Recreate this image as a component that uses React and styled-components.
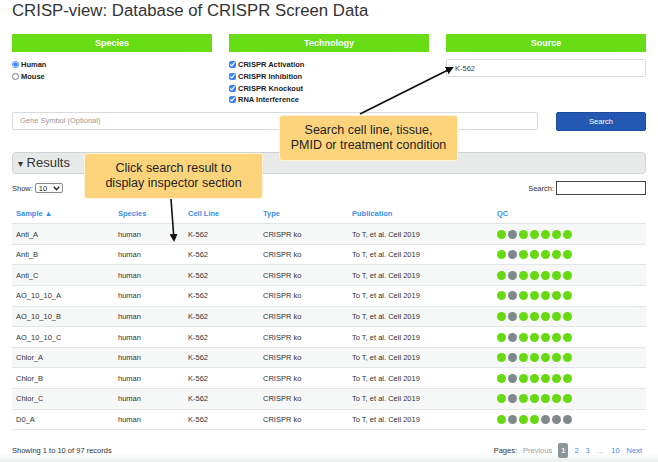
import React from "react";
import styled, { createGlobalStyle } from "styled-components";

const GlobalStyle = createGlobalStyle`
  html, body { margin: 0; padding: 0; background: #fff; }
  body { font-family: "Liberation Sans", Arial, sans-serif; color: #333; }
  * { box-sizing: border-box; }
`;

const rows = [
  ["Anti_A", "gxggggg"],
  ["Anti_B", "gxggggg"],
  ["Anti_C", "gxggggg"],
  ["AO_10_10_A", "gxggggg"],
  ["AO_10_10_B", "gxggggg"],
  ["AO_10_10_C", "gxggggg"],
  ["Chlor_A", "gxggggg"],
  ["Chlor_B", "gxggggg"],
  ["Chlor_C", "gxggggg"],
  ["D0_A", "gxggxxx"],
];

const App = () => {
  return (
    <Page>
      <GlobalStyle />
      <Title>CRISP-view: Database of CRISPR Screen Data</Title>
      <Filters>
        <FilterCol>
          <Header>Species</Header>
          <Options>
            <Option><input type="radio" name="sp" defaultChecked /> Human</Option>
            <Option><input type="radio" name="sp" /> Mouse</Option>
          </Options>
        </FilterCol>
        <FilterCol>
          <Header>Technology</Header>
          <Options>
            <Option><input type="checkbox" defaultChecked /> CRISPR Activation</Option>
            <Option><input type="checkbox" defaultChecked /> CRISPR Inhibition</Option>
            <Option><input type="checkbox" defaultChecked /> CRISPR Knockout</Option>
            <Option><input type="checkbox" defaultChecked /> RNA Interference</Option>
          </Options>
        </FilterCol>
        <FilterCol>
          <Header>Source</Header>
          <TextBox defaultValue="K-562" />
        </FilterCol>
      </Filters>

      <SearchRow>
        <GeneBox placeholder="Gene Symbol (Optional)" />
        <SearchButton>Search</SearchButton>
      </SearchRow>

      <ResultsBar><Caret>▾</Caret> Results</ResultsBar>

      <ToolRow>
        <Show>
          Show:
          <Select>
            <span>10</span>
            <svg width="7" height="5" viewBox="0 0 7 5">
              <path d="M0.8 0.8 L3.5 3.8 L6.2 0.8" fill="none" stroke="#222" strokeWidth="1.4" />
            </svg>
          </Select>
        </Show>
        <Show>
          Search:
          <FilterBox />
        </Show>
      </ToolRow>

      <Table>
        <thead>
          <tr>
            <Th $w={102}>Sample ▲</Th>
            <Th $w={70}>Species</Th>
            <Th $w={75}>Cell Line</Th>
            <Th $w={89}>Type</Th>
            <Th $w={145}>Publication</Th>
            <Th>QC</Th>
          </tr>
        </thead>
        <tbody>
          {rows.map(([name, qc], i) => (
            <Tr key={name} $odd={i % 2 === 0}>
              <Td>{name}</Td>
              <Td>human</Td>
              <Td>K-562</Td>
              <Td>CRISPR ko</Td>
              <Td>To T, et al. Cell 2019</Td>
              <Td>
                <Dots>
                  {qc.split("").map((c, j) => (
                    <Dot key={j} $ok={c === "g"} />
                  ))}
                </Dots>
              </Td>
            </Tr>
          ))}
        </tbody>
      </Table>

      <Footer>
        <span>Showing 1 to 10 of 97 records</span>
        <Pager>
          <PagerLabel>Pages:</PagerLabel>
          <PageLink $muted>Previous</PageLink>
          <Current>1</Current>
          <PageLink>2</PageLink>
          <PageLink>3</PageLink>
          <PageLink $muted>…</PageLink>
          <PageLink>10</PageLink>
          <PageLink>Next</PageLink>
        </Pager>
      </Footer>

      <Arrows width="658" height="462" viewBox="0 0 658 462">
        <defs>
          <marker id="head" markerWidth="8" markerHeight="8" refX="6" refY="4" orient="auto" markerUnits="userSpaceOnUse">
            <path d="M0,0 L8,4 L0,8 Z" fill="#111" />
          </marker>
        </defs>
        <line x1="360" y1="114" x2="452" y2="68" stroke="#111" strokeWidth="1.6" markerEnd="url(#head)" />
        <line x1="171" y1="199" x2="174" y2="240" stroke="#111" strokeWidth="1.6" markerEnd="url(#head)" />
      </Arrows>

      <Callout style={{ left: 279, top: 115 }}>
        Search cell line, tissue,<br />PMID or treatment condition
      </Callout>
      <Callout style={{ left: 84, top: 153 }}>
        Click search result to<br />display inspector section
      </Callout>
    </Page>
  );
};

const Page = styled.div`
  position: relative;
  width: 658px;
  height: 462px;
  padding: 0 12px;
  overflow: hidden;
  background: linear-gradient(#fff 452px, #eef0f0 462px);
`;

const Title = styled.h1`
  margin: 0;
  padding-top: 1px;
  font-size: 16.8px;
  font-weight: normal;
  line-height: 20px;
  color: #333;
`;

const Filters = styled.div`
  display: grid;
  grid-template-columns: repeat(3, 1fr);
  column-gap: 17px;
  margin-top: 13px;
`;

const FilterCol = styled.div`
  display: flex;
  flex-direction: column;
`;

const Header = styled.div`
  height: 18px;
  background: #66dd14;
  color: #fff;
  font-weight: bold;
  font-size: 9px;
  line-height: 18px;
  text-align: center;
`;

const Options = styled.div`
  display: flex;
  flex-direction: column;
  padding-top: 7px;
`;

const Option = styled.label`
  display: flex;
  align-items: center;
  gap: 2px;
  height: 11.7px;
  font-size: 7.5px;
  font-weight: bold;
  color: #222;
  input {
    margin: 0;
    width: 7px;
    height: 7px;
    accent-color: #3b82f6;
  }
`;

const TextBox = styled.input`
  margin-top: 7px;
  height: 18px;
  border: 1px solid #d7dbdb;
  border-radius: 2px;
  padding: 0 8px;
  font-family: inherit;
  font-size: 7.5px;
  color: #444;
`;

const SearchRow = styled.div`
  display: flex;
  gap: 18px;
  margin-top: 6px;
`;

const GeneBox = styled.input`
  flex: 0 0 526px;
  height: 18px;
  border: 1px solid #d7dbdb;
  border-radius: 2px;
  padding: 0 7px;
  font-family: inherit;
  font-size: 7.5px;
  &::placeholder { color: #999; }
`;

const SearchButton = styled.button`
  width: 90px;
  height: 19px;
  border: 1px solid #1d4c9c;
  border-radius: 2px;
  background: #2358b3;
  color: #fff;
  font-family: inherit;
  font-size: 7.5px;
`;

const ResultsBar = styled.div`
  margin-top: 21px;
  height: 22px;
  border: 1px solid #cfd4d4;
  border-radius: 4px;
  background: #e8eaea;
  padding-left: 5px;
  font-size: 13px;
  line-height: 20px;
  color: #333;
`;

const Caret = styled.span`
  font-size: 10px;
`;

const ToolRow = styled.div`
  display: flex;
  justify-content: space-between;
  align-items: center;
  margin-top: 7px;
  height: 15px;
`;

const Show = styled.div`
  display: flex;
  align-items: center;
  gap: 2px;
  font-size: 7.5px;
  color: #333;
`;

const Select = styled.div`
  display: flex;
  align-items: center;
  justify-content: space-between;
  width: 28px;
  height: 10px;
  padding: 0 2px 0 3px;
  border: 1px solid #888;
  border-radius: 2px;
  background: #fff;
  font-size: 7.5px;
  color: #222;
`;

const FilterBox = styled.input`
  width: 90px;
  height: 14px;
  border: 1.5px solid #444;
  border-radius: 0;
`;

const Table = styled.table`
  width: 100%;
  border-collapse: collapse;
  margin-top: 8px;
  font-size: 7.5px;
`;

const Th = styled.th`
  width: ${(p) => (p.$w ? `${p.$w}px` : "auto")};
  text-align: left;
  padding: 0 4px;
  height: 20px;
  color: #3b8ee8;
  font-weight: bold;
  border-bottom: 1px solid #e0e3e3;
`;

const Tr = styled.tr`
  background: ${(p) => (p.$odd ? "#f6f7f7" : "#fff")};
  border-bottom: 1px solid #e3e6e6;
`;

const Td = styled.td`
  height: 20.6px;
  padding: 0 4px;
  color: #333;
`;

const Dots = styled.div`
  display: flex;
  gap: 2px;
`;

const Dot = styled.span`
  width: 9px;
  height: 9px;
  border-radius: 50%;
  background: ${(p) => (p.$ok ? "#66d911" : "#7f888b")};
`;

const Footer = styled.div`
  display: flex;
  justify-content: space-between;
  align-items: center;
  margin-top: 13px;
  padding-right: 3px;
  font-size: 7.5px;
  color: #333;
`;

const Pager = styled.div`
  display: flex;
  align-items: center;
  gap: 5px;
`;

const PagerLabel = styled.span`
  color: #333;
`;

const PageLink = styled.span`
  color: ${(p) => (p.$muted ? "#9aa0a3" : "#3b8ee8")};
  padding: 0 1px;
`;

const Current = styled.span`
  background: #8c9598;
  color: #fff;
  border-radius: 2px;
  padding: 3px 3px;
  font-weight: bold;
`;

const Arrows = styled.svg`
  position: absolute;
  left: 0;
  top: 0;
  pointer-events: none;
`;

const Callout = styled.div`
  position: absolute;
  width: 179px;
  height: 46px;
  background: #fdd47c;
  border: 1px solid #fff3d8;
  border-radius: 3px;
  display: flex;
  align-items: center;
  justify-content: center;
  text-align: center;
  font-size: 12.5px;
  line-height: 15px;
  color: #222;
`;

export default App;
